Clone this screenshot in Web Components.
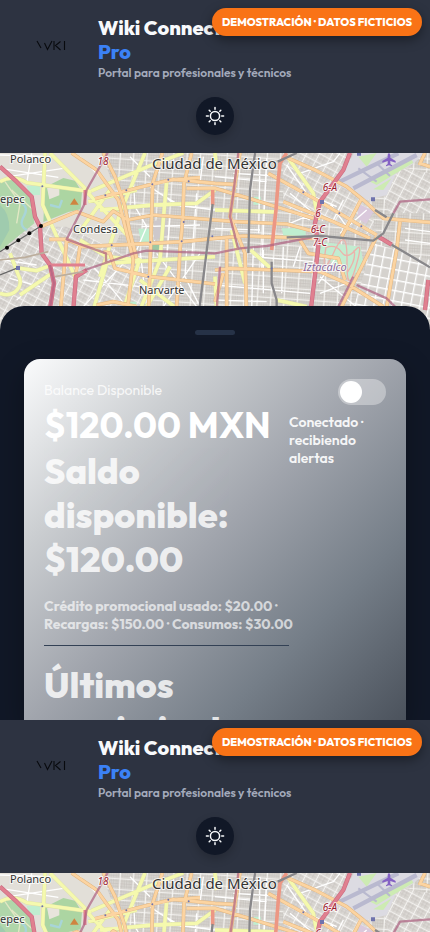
<!DOCTYPE html>
<html lang="es">
<head>
<meta charset="utf-8">
<meta name="viewport" content="width=device-width, initial-scale=1">
<title>Wiki Connect Pro</title>
<style>
  :root {
    --font: Outfit, Lato, "Open Sans", sans-serif;
    --header: #2d3341;
    --night: #111827;
    --text: #f8fafc;
    --muted: #a3aabb;
    --blue: #3b82f6;
    --orange: #f97316;
  }
  body {
    display: flex;
    flex-direction: column;
    height: 100vh;
    margin: 0;
    overflow: hidden;
    background: var(--night);
    font-family: var(--font);
    color: var(--text);
  }
  portal-screen:first-child { flex: none; }
  portal-screen { flex: 0 1 auto; min-height: 0; }
</style>
</head>
<body>
<portal-screen></portal-screen>
<portal-screen></portal-screen>

<script>
(function () {
  function define(name, html) {
    const template = document.createElement('template');
    template.innerHTML = html;
    customElements.define(name, class extends HTMLElement {
      constructor() {
        super();
        this.attachShadow({ mode: 'open' });
        this.shadowRoot.appendChild(template.content.cloneNode(true));
      }
    });
  }

  define('demo-badge', `
    <style>
      :host {
        display: block;
        padding: 0 10px;
        border-radius: 14px;
        background: var(--orange);
        box-shadow: 0 4px 12px rgba(0, 0, 0, .4);
        color: #fff;
        font-size: 11px;
        font-weight: 800;
        line-height: 28px;
        white-space: nowrap;
      }
    </style>
    <slot></slot>
  `);

  define('theme-button', `
    <style>
      :host { display: block; }
      button {
        display: grid;
        place-items: center;
        width: 38px;
        height: 38px;
        padding: 0;
        border: 0;
        border-radius: 50%;
        background: var(--night);
        box-shadow: 0 4px 10px rgba(0, 0, 0, .2);
        color: var(--text);
      }
    </style>
    <button type="button" aria-label="Cambiar tema">
      <svg width="20" height="20" viewBox="0 0 20 20" fill="none" stroke="currentColor" stroke-width="1.5" stroke-linecap="round">
        <circle cx="10" cy="10" r="4.6"/>
        <path d="M10 1.6v1.6M10 16.800v1.600M1.400 10h1.900M16.700 10h1.900M4.200 4.200l1 1M14.800 14.800l1 1M4.200 15.800l1-1M14.800 5.200l1-1"/>
      </svg>
    </button>
  `);

  define('portal-header', `
    <style>
      :host {
        display: flex;
        flex-direction: column;
        gap: 15px;
        padding: 16px 16px 18px;
        background: var(--header);
      }
      .brand { display: flex; gap: 12px; }
      .logo { flex: none; width: 70px; height: 60px; }
      h1 {
        margin: 0;
        font-size: 20px;
        font-weight: 800;
        line-height: 24px;
      }
      h1 span { display: block; color: var(--blue); }
      p {
        margin: 0;
        color: var(--muted);
        font-size: 12px;
        font-weight: 600;
        line-height: 18px;
      }
      theme-button { align-self: center; }
    </style>
    <div class="brand">
      <svg class="logo" viewBox="0 0 70 60" fill="none" stroke="#080a0e" stroke-width="1.1" role="img" aria-label="Wiki">
        <path d="M21 25l4 7M28.500 27l3 6.500 4.500-8.500M38 25v9M44.500 25.500l-5 4 5 4.500M48.500 25v9"/>
      </svg>
      <div>
        <h1>Wiki Connect <span>Pro</span></h1>
        <p>Portal para profesionales y técnicos</p>
      </div>
    </div>
    <theme-button></theme-button>
  `);

  define('street-map', `
    <style>
      :host { display: block; height: 183px; overflow: hidden; background: #dcd9d5; }
      svg { display: block; width: 100%; height: 100%; }
      path { fill: none; stroke-linejoin: round; }
      .white { stroke: #fff; stroke-width: 4; }
      .y-edge { stroke: #dcdfa4; stroke-width: 12; }
      .y { stroke: #f5f9ae; stroke-width: 10; }
      .o-edge { stroke: #e2b680; stroke-width: 11; }
      .o { stroke: #fcd4a1; stroke-width: 8; }
      .r-edge { stroke: #cb6b84; stroke-width: 13; }
      .r { stroke: #e0808f; stroke-width: 9; }
      .coral { stroke: #ec9784; stroke-width: 11; }
      .metro { stroke: #ad5f80; stroke-width: 7; opacity: .7; }
      .rail { stroke: #88878a; stroke-width: 7; }
      text {
        font-family: "Noto Sans", sans-serif;
        font-size: 11px;
        fill: #333;
        stroke: #fff;
        stroke-opacity: .75;
        stroke-width: 2px;
        paint-order: stroke;
      }
      .city { font-size: 15px; }
      .ref { font-size: 10px; font-style: italic; fill: #9c1b30; text-anchor: middle; }
      .area { font-style: italic; fill: #8c6a9e; text-anchor: middle; }
    </style>
    <svg viewBox="0 0 430 183" preserveAspectRatio="xMidYMin slice" aria-label="Mapa de Ciudad de México">
      <defs>
        <pattern id="blocks" width="40" height="32" patternUnits="userSpaceOnUse" patternTransform="rotate(4)">
          <rect width="40" height="32" fill="#dad7d2"/>
          <path d="M3 8H38M3 16H38M3 24H38M8 2V30M15 2V30M22 2V30M29 2V30M35 2V30" stroke="#c5c1bc" stroke-width="2"/>
          <path d="M0 1H40M1 0V32" stroke="#f8f7f5" stroke-width="3"/>
        </pattern>
        <pattern id="slanted" width="34" height="26" patternUnits="userSpaceOnUse" patternTransform="rotate(28)">
          <rect width="34" height="26" fill="#dcd9d5"/>
          <path d="M2 8H32M2 17H32M11 2V24M22 2V24" stroke="#c6c3be" stroke-width="2"/>
          <path d="M0 1H34M1 0V26" stroke="#f8f7f5" stroke-width="3"/>
        </pattern>
        <pattern id="grid" width="27" height="31" patternUnits="userSpaceOnUse" patternTransform="rotate(11)">
          <rect width="27" height="31" fill="#d5d2ce"/>
          <path d="M0 2H27M2 0V31" stroke="#fff" stroke-width="4"/>
        </pattern>
        <path id="yellow" d="M0 95Q40 72 80 98L275 125M150 9L265 125M135 9L128 165 175 270 225 380M275 122L455 45 550 9M435 9L360 190 300 380M260 125L395 270M265 155L410 120M330 120L235 250M300 180L460 165 590 160 645 120M0 430C40 445 75 410 55 375L30 310M60 355L110 362 155 345M60 435L155 370M320 340L280 480M320 340L645 320M500 95L490 210 480 330 420 480M420 325L370 480M420 390L530 475M510 350L440 470M240 270L320 320 415 330M862 20L940 130 955 210M645 180L830 186M695 240L735 400M752 300L812 355M830 450L920 470M645 9L650 60M645 380L650 480"/>
        <path id="orange" d="M215 9L290 60 355 150 378 240 400 330 380 500M310 9L345 80 375 170 388 240 410 325M285 146L455 103 520 88 645 100 710 104M123 230L230 185 310 215 340 183 382 210 460 195 645 210 710 215 860 222 945 245M148 268L200 268 250 290 450 280 550 275 645 265 730 258 945 265M310 305L330 310 345 355 450 380 645 402M200 268L180 500M240 290L225 390M487 9L458 100 455 200 445 500M575 9L552 100 548 210 540 300 528 500M510 90L600 83M560 115L645 115 780 155 940 205M855 20L945 60 1040 110 1090 150 1150 205 1290 217M805 70L950 150 1130 255M850 155L1000 215 1110 265M1085 145L1025 260M1200 215L1190 300 1155 500M1130 260L1080 360 1010 500M645 360L690 355 960 365 1040 400 1150 470M900 270L925 310 1015 325 1035 390M680 260L680 500M720 9L700 130 690 200 735 310 740 500M290 465L340 455 410 470M645 455L670 370M1258 45L1275 9M1260 40L1290 50"/>
        <path id="trunk" d="M0 50L50 95 95 140 105 200 120 230 125 310 150 345 162 400 146 500M218 500L228 380 260 360M1050 9L1030 60 960 155 945 220 955 290 930 500M1135 260L1175 284M1285 390L1275 480"/>
      </defs>
      <g transform="scale(.33333) translate(0 -9)">
        <rect width="1290" height="570" fill="url(#blocks)"/>
        <path d="M0 0H300L380 210 320 340 220 570H0Z" style="fill:#e2dfd8"/>
        <path d="M0 230H200L350 300 450 400 400 570H0Z" style="fill:url(#slanted)"/>
        <path d="M850 0H1080L1130 260 850 180Z" style="fill:url(#slanted)"/>
        <path d="M1120 280L1290 330V570H1030Z" style="fill:url(#grid)"/>
        <path d="M1200 50L1290 70V190L1165 190 1150 130Z" style="fill:url(#slanted)"/>

        <!-- parks and water -->
        <path d="M0 95L45 88 92 140 103 220 0 303Z" style="fill:#b0d6aa"/>
        <path d="M0 165Q30 190 28 240L0 290Z" style="fill:#9fcbae"/>
        <path d="M135 112L190 84 225 92 246 126 242 178 205 186 130 216Z" style="fill:#acd5a2"/>
        <path d="M140 108h38v28l-30 12z" style="fill:#e8e4dc"/>
        <path d="M65 160q22 12 6 40t10 40M150 165l28 7 8-22" style="stroke:#a8d5d8;stroke-width:7"/>
        <path d="M15 95L60 160 50 220M35 120L100 180" style="stroke:#e2e8c4;stroke-width:4"/>
        <path d="M0 15L160 20M0 55L175 82M25 80L190 55M95 10L80 100" class="white"/>
        <path d="M80 107h40v28H88zM415 236h33v40h-25zM385 455h24v24h-24zM762 140h20v24h-22zM845 235h72v26h-66z" style="fill:#bfeed0"/>
        <path d="M455 285h30v16h-32z" style="fill:#9dc7a2"/>
        <path d="M462 212L500 208 505 255 462 270Z" style="fill:#cdc8cb"/>

        <!-- airport -->
        <path d="M1062 9H1275L1235 45 1190 66 1160 135 1100 150 1010 104Z" style="fill:#dcdbe2"/>
        <path d="M1100 90L1230 20 1240 38 1130 105ZM1075 20L1130 9 1100 50ZM1120 118L1175 85 1150 120Z" style="fill:#cdebb3"/>
        <path d="M1015 97L1195 10M1060 115L1250 15" style="stroke:#b9b9cf;stroke-width:13"/>
        <path d="M1075 55L1130 95M1130 40L1170 78" style="stroke:#b9b9cf;stroke-width:6"/>
        <path d="M1078 162L1122 184 1098 222 1072 204Z" style="fill:#dac9dc"/>
        <path d="M960 275L1082 290 1090 340 1050 390 1012 350 960 310Z" style="fill:#c2ecd0"/>
        <path d="M978 292q30-10 46 14t42-6 0 55-25-25-40-22-23-16zM1040 370q30-40 22-70" style="stroke:#ecb2ab;stroke-width:4"/>

        <!-- roads -->
        <path class="white" d="M240 20L300 80M390 20L450 80M400 90L405 170 440 230 410 300M450 110L530 165 645 180M425 230L600 225M480 130L545 170M250 390L420 410M280 350L380 470M380 330L250 470M420 300L440 470M470 310L590 470M600 310L490 470M560 300L555 380 600 470M645 80L800 95M645 235L780 240M700 70L830 78M780 20L776 250M800 25L785 360M860 45L920 130 1010 170M870 130L940 190 870 220M900 70L1000 35 1020 10M870 185L930 210M760 320L940 335M760 290L755 480M790 300V430M850 290L845 430M900 290L880 350M645 405L930 430M645 450L800 455M960 380L1080 480M960 430L1040 400M990 160L1040 230M1030 150L1000 210M1010 320L955 400M1215 235L1290 245M1215 270L1290 280M610 20L600 100M590 130L575 330M510 200L500 330M1020 250L1100 180M10 330L110 345M30 385L120 410M50 450L120 390"/>
        <use href="#yellow" class="y-edge"/>
        <use href="#yellow" class="y"/>
        <use href="#orange" class="o-edge"/>
        <use href="#orange" class="o"/>
        <use href="#trunk" class="r-edge"/>
        <use href="#trunk" class="r"/>
        <path class="r" d="M150 345H255M255 120V165"/>
        <path class="coral" d="M860 9L840 40 835 90 828 180 815 300M638 120V165"/>
        <path class="metro" d="M323 9L260 120 252 165 200 268 318 310 318 340M255 360L400 310 440 302 645 310 720 295 800 288 935 262M150 345L162 400 146 500M715 9L700 130 690 200 715 300M1180 190L1200 155 1290 148M1070 405L1160 445 1190 475M1060 380L1010 480M660 350L650 480"/>
        <path class="rail" d="M638 162L595 500M765 9L750 120 745 310M815 335V400L830 450V500M860 262L960 258 1120 272 1150 250 1180 190M833 35L890 9M1175 284L1290 352M1125 180L1160 202"/>
        <path d="M0 305L123 228M0 375L55 353" style="stroke:#666;stroke-width:4"/>
        <path d="M0 330L75 322 145 305M165 380L250 365" style="stroke:#bcae9d;stroke-width:5"/>

        <!-- stations -->
        <g fill="#050505"><circle cx="21" cy="293" r="6"/><circle cx="55" cy="271" r="6"/><circle cx="88" cy="250" r="6"/><circle cx="123" cy="228" r="6"/></g>
        <g fill="#6f73ad">
          <path d="M48 348h12v12H48zM960 150h12v12h-12zM1113 142h12v12h-12zM1071 9h12v8h-12z" style="fill:#6f73ad"/>
          <circle cx="127" cy="109" r="3"/><circle cx="379" cy="121" r="3"/><circle cx="457" cy="103" r="3"/><circle cx="505" cy="89" r="3"/><circle cx="566" cy="94" r="3"/><circle cx="335" cy="286" r="3"/><circle cx="451" cy="277" r="3"/><circle cx="445" cy="380" r="3"/><circle cx="545" cy="274" r="3"/><circle cx="551" cy="216" r="3"/><circle cx="637" cy="259" r="3"/><circle cx="815" cy="355" r="3"/><circle cx="910" cy="127" r="3"/><circle cx="1018" cy="190" r="3"/><circle cx="1084" cy="229" r="3"/><circle cx="316" cy="136" r="3"/>
        </g>
        <path d="M210 164L223 145 236 164Z" style="fill:#cf8440"/>
        <path d="M1167 10q4 0 4 6v7l16 10v5l-16-5v9l5 4v3l-9-3-9 3v-3l5-4v-9l-16 5v-5l16-10v-7q0-6 4-6z" style="fill:#8461c4"/>
      </g>
      <text x="10" y="10">Polanco</text>
      <text x="0" y="50">epec</text>
      <text x="73" y="80">Condesa</text>
      <text x="139" y="141">Narvarte</text>
      <text class="city" x="152" y="16">Ciudad de México</text>
      <text class="ref" x="103" y="12">18</text>
      <text class="ref" x="330" y="38">6-A</text>
      <text class="ref" x="318" y="64">6</text>
      <text class="ref" x="318" y="80">6-C</text>
      <text class="ref" x="320" y="93">7-C</text>
      <text class="area" x="325" y="118">Iztacalco</text>
    </svg>
  `);

  define('connection-switch', `
    <style>
      :host { display: block; }
      label { display: flex; flex-direction: column; gap: 8px; }
      input {
        appearance: none;
        align-self: flex-end;
        display: flex;
        width: 48px;
        height: 26px;
        margin: 0;
        padding: 2px;
        box-sizing: border-box;
        border-radius: 13px;
        background: rgba(255, 255, 255, .35);
      }
      input::before {
        content: "";
        width: 22px;
        height: 22px;
        border-radius: 50%;
        background: #fff;
      }
      input:checked { justify-content: flex-end; }
      span { font-size: 14px; font-weight: 600; line-height: 18px; opacity: .9; }
    </style>
    <label><input type="checkbox"><span><slot></slot></span></label>
  `);

  define('balance-card', `
    <style>
      :host {
        display: flex;
        align-items: flex-start;
        box-sizing: border-box;
        padding: 20px;
        overflow: hidden;
        border-radius: 16px 16px 0 0;
        background: linear-gradient(135deg, #fafbfc, #cbced1 25%, #a0a4ac 50%, #757e88 75%, #4b525c);
        box-shadow: 0 10px 30px rgba(0, 0, 0, .3);
        color: #fff;
      }
      .details { flex: 1; min-width: 0; }
      connection-switch { flex: none; width: 97px; }
      p, h2, h3 { margin: 0; }
      .label { font-size: 14px; line-height: 22px; opacity: .8; }
      .amount { font-size: 36px; font-weight: 700; line-height: 48px; white-space: nowrap; }
      h2, h3 { font-size: 36px; font-weight: 800; line-height: 44px; opacity: .8; }
      .usage {
        margin-top: 16px;
        font-size: 14px;
        font-weight: 700;
        line-height: 18px;
        white-space: nowrap;
        opacity: .65;
      }
      .history { margin-top: 12px; padding-top: 17px; border-top: 1px solid #334155; }
    </style>
    <div class="details">
      <p class="label">Balance Disponible</p>
      <p class="amount">$120.00 MXN</p>
      <h2>Saldo disponible: $120.00</h2>
      <p class="usage">Crédito promocional usado: $20.00 ·<br>Recargas: $150.00 · Consumos: $30.00</p>
      <section class="history"><h3>Últimos movimientos</h3></section>
    </div>
    <connection-switch>Conectado · recibiendo alertas</connection-switch>
  `);

  define('bottom-sheet', `
    <style>
      :host {
        display: flex;
        flex-direction: column;
        box-sizing: border-box;
        padding: 24px 24px 0;
        border-radius: 24px 24px 0 0;
        background: var(--night);
      }
      .handle {
        flex: none;
        align-self: center;
        width: 40px;
        height: 5px;
        margin-bottom: 24px;
        border-radius: 3px;
        background: #263247;
      }
      ::slotted(*) { flex: 1; min-height: 0; }
    </style>
    <div class="handle"></div>
    <slot></slot>
  `);

  define('portal-screen', `
    <style>
      :host {
        position: relative;
        display: flex;
        flex-direction: column;
        height: 720px;
        overflow: hidden;
      }
      portal-header, street-map { flex: none; }
      /* the sheet and the badge lie over the map and the header */
      bottom-sheet { position: relative; flex: 1; min-height: 0; margin-top: -30px; }
      demo-badge { position: absolute; top: 8px; right: 8px; }
    </style>
    <portal-header></portal-header>
    <street-map></street-map>
    <bottom-sheet><balance-card></balance-card></bottom-sheet>
    <demo-badge>DEMOSTRACIÓN · DATOS FICTICIOS</demo-badge>
  `);
})();
</script>
</body>
</html>
